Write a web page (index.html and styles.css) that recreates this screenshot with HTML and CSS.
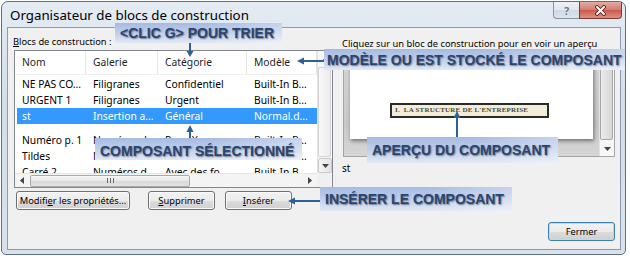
FILE: index.html
```html
<!DOCTYPE html>
<html lang="fr">
<head>
  <meta charset="UTF-8" />
  <title>Organisateur de blocs de construction</title>
  <link rel="stylesheet" href="styles.css">
</head>
<body>
  <div class="window">
    <div class="titlebar">
      <span class="title">Organisateur de blocs de construction</span>
      <div class="caption">
        <span class="cap-btn help">?</span>
        <span class="cap-btn close">
          <svg width="13" height="11" viewBox="0 0 13 11">
            <path d="M3 2 L10 9 M10 2 L3 9" stroke="#5c1d18" stroke-width="3.8" stroke-linecap="round" />
            <path d="M3 2 L10 9 M10 2 L3 9" stroke="#fff" stroke-width="2" stroke-linecap="round" />
          </svg>
        </span>
      </div>
    </div>

    <div class="client">
      <div class="left">
        <div class="field-label"><u>B</u>locs de construction :</div>
        <div class="listbox">
          <div class="list-view">
            <div class="list-head">
              <span>Nom</span><span>Galerie</span><span>Catégorie</span><span>Modèle</span>
            </div>
            <div class="row"><span>NE PAS CO...</span><span>Filigranes</span><span>Confidentiel</span><span>Built-In B...</span></div>
            <div class="row"><span>URGENT 1</span><span>Filigranes</span><span>Urgent</span><span>Built-In B...</span></div>
            <div class="row selected"><span>st</span><span>Insertion a...</span><span>Général</span><span>Normal.d...</span></div>
            <div class="row gap"><span>Numéro p. 1</span><span>Numéros d...</span><span>Page X</span><span>Built-In B...</span></div>
            <div class="row"><span>Tildes</span><span>Numéros d...</span><span>Tildes</span><span>Built-In B...</span></div>
            <div class="row"><span>Carré 2</span><span>Numéros d...</span><span>Avec des fo...</span><span>Built-In B...</span></div>
          </div>
          <div class="vscroll">
            <span class="arrow-btn"><svg width="7" height="4" viewBox="0 0 7 4"><polygon points="0,4 7,4 3.5,0" fill="#444" /></svg></span>
            <span class="thumb"></span>
            <span class="arrow-btn boxed"><svg width="7" height="4" viewBox="0 0 7 4"><polygon points="0,0 7,0 3.5,4" fill="#444" /></svg></span>
          </div>
          <div class="hscroll">
            <span class="arrow-btn"><svg width="4" height="7" viewBox="0 0 4 7"><polygon points="4,0 4,7 0,3.5" fill="#444" /></svg></span>
            <span class="hthumb">
              <svg width="7" height="5" viewBox="0 0 7 5"><path d="M0.5 0 V5 M3.5 0 V5 M6.5 0 V5" stroke="#6a6a6a" stroke-width="1" /></svg>
            </span>
            <span class="track"></span>
            <span class="arrow-btn"><svg width="4" height="7" viewBox="0 0 4 7"><polygon points="0,0 0,7 4,3.5" fill="#444" /></svg></span>
          </div>
          <div class="corner"></div>
        </div>
        <div class="actions">
          <button class="btn btn-edit">Modifi<u>e</u>r les propriétés...</button>
          <button class="btn btn-delete"><u>S</u>upprimer</button>
          <button class="btn btn-insert"><u>I</u>nsérer</button>
        </div>
      </div>

      <div class="right">
        <div class="hint">Cliquez sur un bloc de construction pour en voir un aperçu</div>
        <div class="preview">
          <div class="preview-area">
            <div class="page">
              <div class="page-heading">I.&nbsp; LA STRUCTURE DE L'ENTREPRISE</div>
            </div>
          </div>
          <div class="pscroll">
            <span class="arrow-btn"><svg width="7" height="4" viewBox="0 0 7 4"><polygon points="0,4 7,4 3.5,0" fill="#444" /></svg></span>
            <span class="thumb"></span>
            <span class="arrow-btn"><svg width="7" height="4" viewBox="0 0 7 4"><polygon points="0,0 7,0 3.5,4" fill="#444" /></svg></span>
          </div>
        </div>
        <div class="preview-name">st</div>
        <button class="btn btn-close">Fermer</button>
      </div>
    </div>

    <!-- callouts drawn over the dialog -->
    <svg class="arrows" width="625" height="254" viewBox="0 0 625 254">
      <g stroke="#2f5f94" stroke-width="2" fill="none">
        <path d="M188 41 V50" />
        <path d="M322 59 H300" />
        <path d="M188 136 V128" />
        <path d="M455 135 V114" />
        <path d="M318 199 H291" />
      </g>
      <g fill="#2f5f94">
        <polygon points="184.5,49 191.5,49 188,55" />
        <polygon points="295,59 302,55.5 302,62.5" />
        <polygon points="188,123 184.5,130 191.5,130" />
        <polygon points="455,109 451.5,116 458.5,116" />
        <polygon points="286,199 293,195.5 293,202.5" />
      </g>
    </svg>
    <div class="note note-sort">&lt;CLIC G&gt; POUR TRIER</div>
    <div class="note note-model">MODÈLE OU EST STOCKÉ LE COMPOSANT</div>
    <div class="note note-selected">COMPOSANT SÉLECTIONNÉ</div>
    <div class="note note-preview">APERÇU DU COMPOSANT</div>
    <div class="note note-insert">INSÉRER LE COMPOSANT</div>
  </div>
</body>
</html>
```

FILE: styles.css
```css
body {
  margin: 0;
  background: #fff;
  font-family: "Noto Sans", "DejaVu Sans", sans-serif;
  font-size: 10px;
  color: #000;
}
.window {
  position: relative;
  box-sizing: border-box;
  width: 625px;
  height: 254px;
  margin: 1px 0 0 1px;
  padding: 0 4px 4px 5px;
  border: 1px solid #5f6f82;
  border-radius: 7px 7px 5px 5px;
  background: linear-gradient(#e4ebf3, #d3dee9 40%, #d9e2ec);
  display: flex;
  flex-direction: column;
}
.titlebar {
  height: 25px;
  display: flex;
  justify-content: space-between;
  align-items: flex-start;
}
.title {
  padding: 4px 0 0 3px;
  font-size: 13.3px;
  line-height: 18px;
}
.caption {
  display: flex;
  margin-right: -1px;
}
.cap-btn {
  height: 17px;
  box-sizing: border-box;
  display: flex;
  align-items: center;
  justify-content: center;
}
.help {
  width: 26px;
  border: 1px solid #8593a4;
  border-top: none;
  border-right: none;
  border-radius: 0 0 0 4px;
  background: linear-gradient(#eef2f7, #e0e7ef 50%, #cfd9e4 51%, #dbe3ec);
  font-size: 11px;
  font-weight: bold;
  color: #6b737c;
  text-shadow: 0 0 2px #fff;
}
.close {
  width: 43px;
  border: 1px solid #7a3a33;
  border-top: none;
  border-radius: 0 0 4px 0;
  background: linear-gradient(#e2aca3, #d47c71 48%, #c85a4e 52%, #dc9284);
}
.client {
  flex: 1;
  background: #f0f0f0;
  border: 1px solid #8c9bb0;
  display: grid;
  grid-template-columns: 319px 272px;
  column-gap: 10px;
  padding: 0 5px 0 6px;
}
.left {
  display: flex;
  flex-direction: column;
  padding-top: 8px;
}
.field-label {
  font-size: 9.3px;
  line-height: 12px;
  margin-left: -1px;
}
.listbox {
  margin-top: 2px;
  height: 138px;
  box-sizing: border-box;
  border: 1px solid #828790;
  background: #fff;
  display: grid;
  grid-template-columns: 302px 15px;
  grid-template-rows: 122px 14px;
}
.list-view {
  overflow: hidden;
  font-size: 10.3px;
}
.list-head {
  height: 23px;
  display: grid;
  grid-template-columns: 71px 72px 89px 70px;
  border-bottom: 1px solid #f0f0f0;
  margin-bottom: 1px;
  color: #1e1e1e;
}
.list-head span {
  padding-left: 7px;
  line-height: 23px;
  border-right: 1px solid #e5e5e5;
}
.row {
  height: 16px;
  margin-left: 2px;
  display: grid;
  grid-template-columns: 71px 72px 89px 68px;
  line-height: 16px;
}
.row span {
  padding-left: 5px;
  white-space: nowrap;
  overflow: hidden;
}
.row.selected {
  background: #3399ff;
  color: #fff;
}
.row.gap {
  margin-top: 8px;
}
.vscroll, .pscroll {
  background: #f7f7f7;
  border-left: 1px solid #e2e2e2;
  display: flex;
  flex-direction: column;
}
.arrow-btn {
  flex: none;
  width: 14px;
  height: 15px;
  display: flex;
  align-items: center;
  justify-content: center;
  box-sizing: border-box;
}
.arrow-btn.boxed {
  border: 1px solid #c9c9c9;
  border-radius: 2px;
  background: linear-gradient(90deg, #f6f6f6, #e4e4e4);
}
.vscroll .thumb {
  flex: 1;
  margin: 1px 1px 1px 0;
  border: 1px solid #d4d4d4;
  border-radius: 2px;
  background: linear-gradient(90deg, #f8f8f8, #ececec);
}
.hscroll {
  grid-column: 1;
  display: flex;
  align-items: center;
  background: #f4f4f4;
  border-top: 1px solid #e6e6e6;
}
.hthumb {
  width: 160px;
  height: 12px;
  margin-left: 1px;
  box-sizing: border-box;
  border: 1px solid #a9a9a9;
  border-radius: 2px;
  background: linear-gradient(#f7f7f7, #e6e6e6 50%, #d9d9d9 51%, #e2e2e2);
  display: flex;
  align-items: center;
  justify-content: center;
}
.hscroll .track {
  flex: 1;
}
.corner {
  background: #f0f0f0;
}
.actions {
  display: flex;
  margin-top: 3px;
}
.btn {
  height: 19px;
  box-sizing: border-box;
  padding: 0;
  border: 1px solid #707070;
  border-radius: 3px;
  background: linear-gradient(#f2f2f2, #ebebeb 50%, #dddddd 51%, #cfcfcf);
  box-shadow: inset 0 0 0 1px #fbfbfb;
  font-family: "Noto Sans", "DejaVu Sans", sans-serif;
  font-size: 9.3px;
  color: #000;
}
.btn-edit {
  width: 114px;
  margin-left: 2px;
}
.btn-delete {
  width: 67px;
  margin-left: 18px;
}
.btn-insert {
  width: 67px;
  margin-left: 10px;
}
.right {
  display: flex;
  flex-direction: column;
  padding-top: 10px;
}
.hint {
  font-size: 9.3px;
  line-height: 12px;
  margin-left: -1px;
  white-space: nowrap;
}
.preview {
  margin-top: 2px;
  height: 105px;
  box-sizing: border-box;
  border: 1px solid #a5a5a5;
  display: grid;
  grid-template-columns: 1fr 15px;
}
.preview-area {
  overflow: hidden;
  background: linear-gradient(#d6d6d6, #c9c9c9 70%, #d6d6d6);
}
.page {
  width: 243px;
  height: 86px;
  margin-left: 6px;
  background: #fff;
  box-shadow: 1px 2px 4px rgba(0, 0, 0, 0.45);
  overflow: hidden;
}
.page-heading {
  width: 159px;
  height: 15px;
  box-sizing: border-box;
  margin: 50px 0 0 40px;
  padding-left: 3px;
  border: 2px solid #2a2a2a;
  background: #f2eddb;
  font-family: "Liberation Serif", serif;
  font-size: 7px;
  font-weight: bold;
  line-height: 11px;
  letter-spacing: 0.2px;
  color: #4d4a30;
  white-space: nowrap;
}
.pscroll .thumb {
  height: 70px;
  margin-right: 1px;
  border: 1px solid #a8a8a8;
  border-radius: 2px;
  background: linear-gradient(90deg, #ececec, #d6d6d6);
}
.pscroll .arrow-btn:last-child {
  margin-top: auto;
}
.preview-name {
  margin-top: 5px;
  line-height: 12px;
  margin-left: -1px;
}
.btn-close {
  width: 67px;
  margin: auto 0 8px auto;
  border-color: #3c7fb1;
  box-shadow: inset 0 0 0 1px #b4dcf5;
}
.arrows {
  position: absolute;
  left: 0;
  top: 0;
}
.note {
  position: absolute;
  display: flex;
  align-items: center;
  box-sizing: border-box;
  padding: 0 8px 0 5px;
  background:
    linear-gradient(90deg, rgba(255, 255, 255, 0) 55%, rgba(255, 255, 255, 0.35)),
    linear-gradient(#a6bae2, #c3d1ec 55%, #e2e9f5);
  font-family: "Liberation Sans", Arial, sans-serif;
  font-size: 14px;
  font-weight: bold;
  color: #2a4570;
  text-shadow: 1px 1px 1.5px rgba(30, 40, 60, 0.55);
  white-space: nowrap;
}
.note-sort {
  left: 113px;
  top: 21px;
  height: 20px;
}
.note-model {
  left: 322px;
  top: 47px;
  height: 21px;
  padding: 0 3px;
}
.note-selected {
  left: 93px;
  top: 136px;
  height: 22px;
  padding-top: 3px;
}
.note-preview {
  left: 365px;
  top: 135px;
  height: 26px;
}
.note-insert {
  left: 318px;
  top: 185px;
  height: 24px;
}
```
